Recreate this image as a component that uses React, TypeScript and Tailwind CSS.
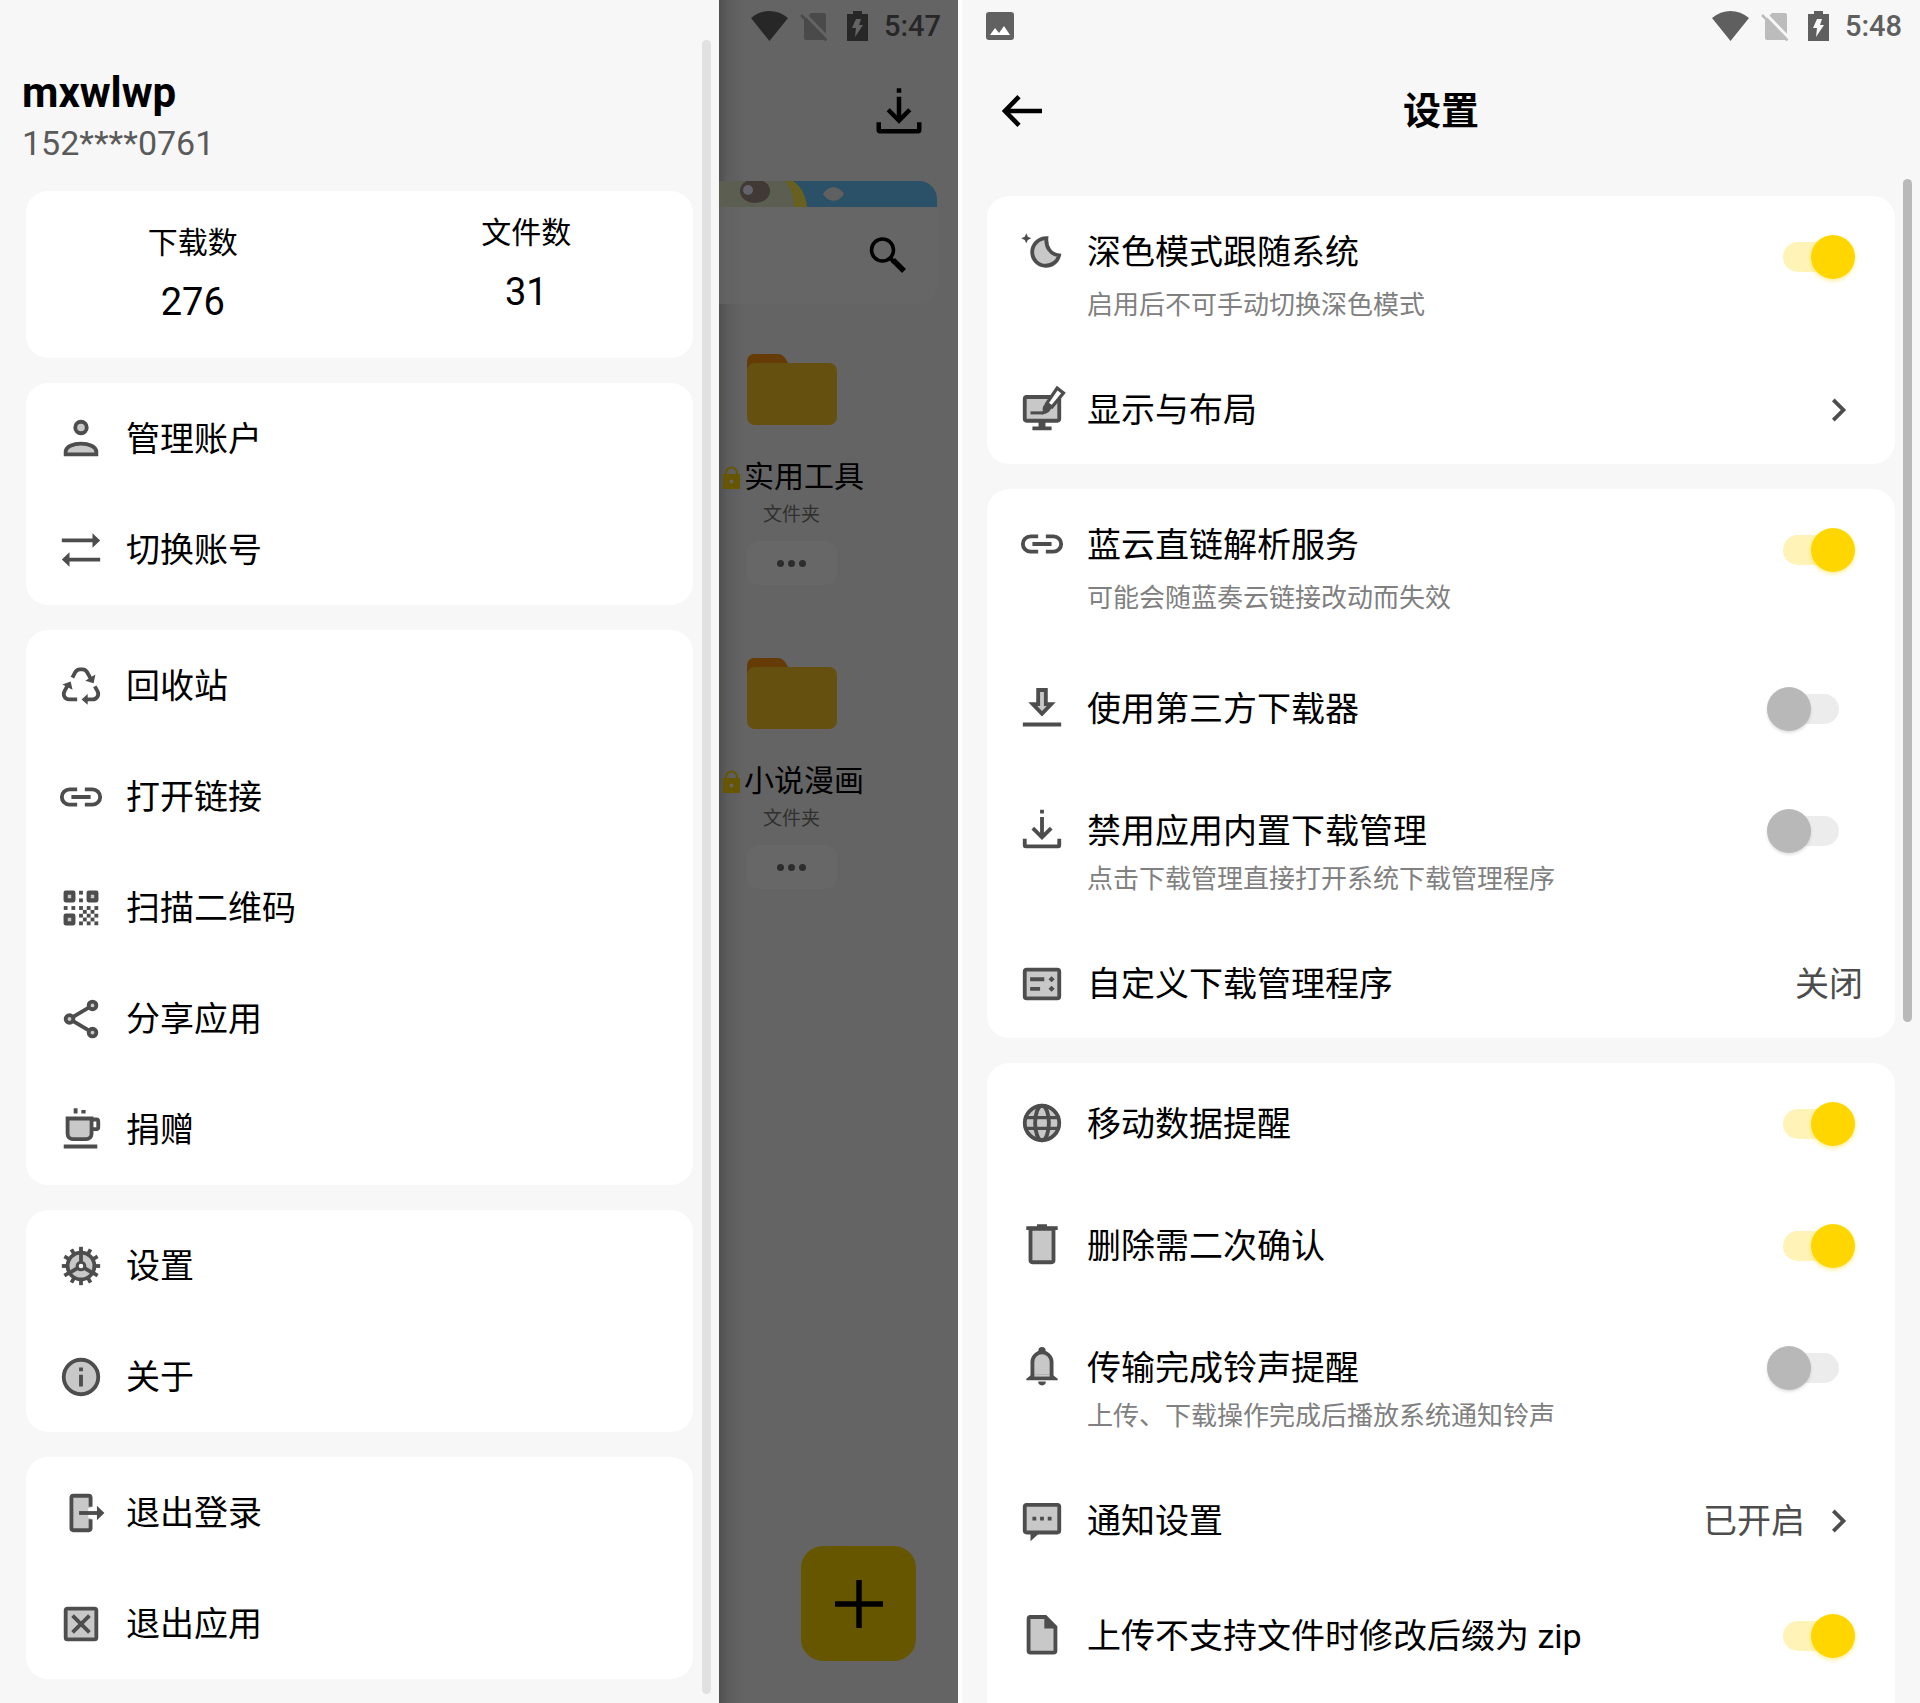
import type { ReactNode } from "react";

const DARK = "#4d4d4d";
const LIGHT = "#c8c8c8";

function Icon({ children, className = "size-[46px]", color = DARK }: { children: ReactNode; className?: string; color?: string }) {
  return (
    <svg
      viewBox="0 0 24 24"
      className={`${className} shrink-0 overflow-visible`}
      fill="none"
      stroke={color}
      strokeWidth={2}
      aria-hidden="true"
    >
      {children}
    </svg>
  );
}

const PersonIcon = () => (
  <Icon>
    <circle cx="12" cy="6" r="3" fill={LIGHT} />
    <path d="M4 20v-1.2C4 16 8 14.4 12 14.4s8 1.6 8 4.4V20z" fill={LIGHT} />
  </Icon>
);

const SwapIcon = () => (
  <Icon>
    <path d="M2 6h16V3.2L22 7l-4 3.8V8H2zM22 16H6v-2.8L2 17l4 3.8V18h16z" fill={DARK} stroke="none" />
  </Icon>
);

const RecycleIcon = () => (
  <Icon>
    <path d="M7.5 7.6 9 4.8a3 3 0 0 1 2.4-1.5h1.4a3 3 0 0 1 2.4 1.5L17 8M5.2 11.5l-1.6 2.8C2.2 16.8 3.6 19 5.8 19H10M19.2 12.2l1.4 2.5c1.1 2-.3 4.3-2.6 4.3h-3" />
    <path d="m19.5 6-.9 4.6-4.4-1.3zM2.3 11.2l4.3-1.6 1 4.3zM12.3 19l3.2-2.8v5.6z" fill={DARK} stroke="none" />
  </Icon>
);

const LinkIcon = () => (
  <Icon>
    <path d="M10 8H6a4 4 0 0 0 0 8h4M14 8h4a4 4 0 0 1 0 8h-4M7 12h10" />
  </Icon>
);

const qrCells = [
  [11, 3], [11, 7], [3, 11], [7, 11],
  [11, 11], [15, 11], [19, 11],
  [13, 13], [17, 13],
  [11, 15], [15, 15], [19, 15],
  [13, 17], [17, 17],
  [11, 19], [15, 19], [19, 19],
];

const QrIcon = () => (
  <Icon>
    <path d="M4 4h4v4H4zM16 4h4v4h-4zM4 16h4v4H4z" fill={LIGHT} strokeLinejoin="round" strokeWidth={2.2} />
    {qrCells.map(([x, y]) => (
      <rect key={`${x}-${y}`} x={x} y={y} width="2" height="2" fill={DARK} stroke="none" />
    ))}
  </Icon>
);

const ShareIcon = () => (
  <Icon>
    <path d="M18 4.9 6 12l12 7.1" />
    <circle cx="6" cy="12" r="2" fill={LIGHT} />
    <circle cx="18" cy="4.9" r="2" fill={LIGHT} />
    <circle cx="18" cy="19.1" r="2" fill={LIGHT} />
  </Icon>
);

const CupIcon = () => (
  <Icon>
    <path d="M5 6h12.5v8a2.8 2.8 0 0 1-2.8 2.8H7.8A2.8 2.8 0 0 1 5 14z" fill={LIGHT} />
    <path d="M17.5 6.5H20a1 1 0 0 1 1 1v3a1 1 0 0 1-1 1h-2.5M3 20.6h17.5" />
    <path d="M8.2.6h2v2.8h-2zM12.2 1.6h2.2v1.8h-2.2z" fill={DARK} stroke="none" />
  </Icon>
);

const gearTeeth = [0, 30, 60, 90, 120, 150, 180, 210, 240, 270, 300, 330];

const GearIcon = () => (
  <Icon>
    {gearTeeth.map((a) => (
      <path key={a} d="M12 2v3" transform={`rotate(${a} 12 12)`} />
    ))}
    <circle cx="12" cy="12" r="7" fill={LIGHT} />
    <path d="M12 12V5M12 12l6 3.6M12 12l-6 3.6" />
    <circle cx="12" cy="12" r="2" fill="#fff" strokeWidth={1.6} />
  </Icon>
);

const InfoIcon = () => (
  <Icon>
    <circle cx="12" cy="12" r="9" fill={LIGHT} />
    <path d="M12 7v2M12 10.8V17" />
  </Icon>
);

const LogoutIcon = () => (
  <Icon>
    <path d="M7 3h10v18H7z" fill={LIGHT} stroke="none" />
    <path d="M17 8.8V4a1 1 0 0 0-1-1H8a1 1 0 0 0-1 1v16a1 1 0 0 0 1 1h8a1 1 0 0 0 1-1v-4.8" />
    <path d="M17 9.5v5" stroke="#fff" strokeWidth={2.4} />
    <path d="M11 12h10" />
    <path d="m20.3 8.2 3.9 3.8-3.9 3.8z" fill={DARK} stroke="none" />
  </Icon>
);

const CloseBoxIcon = () => (
  <Icon>
    <rect x="4" y="4" width="16" height="16" rx="1" fill={LIGHT} />
    <path d="m7.6 7.6 8.8 8.8M16.4 7.6l-8.8 8.8" />
  </Icon>
);

const MoonIcon = () => (
  <Icon>
    <path d="M14.3 5.3c-4.2.1-7.4 3.3-7.4 7.2 0 4 3.1 7.2 7 7.2 3.4 0 6.3-2.2 7-5.4-4.5-.5-7-4.4-6.6-9z" fill={LIGHT} />
    <path d="m3.8 2.8.8 1.8 1.8.8-1.8.8-.8 1.8-.8-1.8-1.8-.8 1.8-.8z" fill={DARK} stroke="none" />
  </Icon>
);

const DisplayIcon = () => (
  <Icon>
    <rect x="3" y="5.2" width="18" height="12.4" rx="1" fill={LIGHT} />
    <path d="M10.2 18h3.6v2.6H17v2H7v-2h3.2z" fill={DARK} stroke="none" />
    <path d="M6 13.5h6.5" strokeWidth={1.6} />
    <path d="M12.4 12.2c-.2-2 .8-3.6 2.3-3.4l2 1.6c.4 2-2.4 4-5 3.9z" fill={DARK} stroke="none" />
    <path d="m19.9.6 3.3 2.5-6 7.4-2.7-2z" fill="#fff" strokeWidth={1.7} />
  </Icon>
);

const ArrowDownIcon = () => (
  <Icon>
    <path d="M10 2.6h4V10h2.8L12 15l-4.8-5H10z" fill={LIGHT} />
    <path d="M2 20.6h20" />
  </Icon>
);

function TrayIcon({ className, color }: { className?: string; color?: string }) {
  return (
    <Icon className={className} color={color}>
      <path d="M12 1.4v2M12 5.2V16M7.2 11l4.8 4.8 4.8-4.8M3 16.6V20a.5.5 0 0 0 .5.5h17a.5.5 0 0 0 .5-.5v-3.4" />
    </Icon>
  );
}

const PanelIcon = () => (
  <Icon>
    <rect x="3" y="4.5" width="18" height="15" rx="1" fill={LIGHT} />
    <path d="M5.8 9.5h7.4M5.8 14.5H11" />
    <path d="m17 7.9 1.6 1.6-1.6 1.6-1.6-1.6zM17 12.9l1.6 1.6-1.6 1.6-1.6-1.6z" fill={DARK} stroke="none" />
  </Icon>
);

const GlobeIcon = () => (
  <Icon>
    <circle cx="12" cy="12" r="9" fill={LIGHT} />
    <ellipse cx="12" cy="12" rx="3.6" ry="9" />
    <path d="M3.6 9.2h16.8M3.6 14.8h16.8" strokeWidth={1.8} />
  </Icon>
);

const TrashIcon = () => (
  <Icon>
    <path d="M6 3.5V20a1 1 0 0 0 1 1h10a1 1 0 0 0 1-1V3.5z" fill={LIGHT} />
    <path d="M3.8 3.2h16.4M9.4 2.2h5.2" />
  </Icon>
);

const BellIcon = () => (
  <Icon>
    <circle cx="12" cy="3.4" r="1.9" fill={DARK} stroke="none" />
    <path d="M10 19.6a2 2 0 0 0 4 0z" fill={DARK} stroke="none" />
    <path d="M7 17.6V9.4a5 5 0 0 1 10 0v8.2z" fill={LIGHT} />
    <path d="M3.8 18.9v-.8L6.5 16h11l2.7 2.1v.8z" fill={DARK} stroke="none" />
    <path d="M8 16h8v1H8z" fill={LIGHT} stroke="none" />
  </Icon>
);

const ChatIcon = () => (
  <Icon>
    <path d="M6 18h5l-5 4.6z" fill={DARK} stroke="none" />
    <rect x="3" y="3.6" width="18" height="14.4" rx="1" fill={LIGHT} />
    <path d="M7 10.8h2M11 10.8h2M15 10.8h2" />
  </Icon>
);

const FileIcon = () => (
  <Icon>
    <path d="M6 2.6h7.8L19 7.8v12.4a1 1 0 0 1-1 1H6a1 1 0 0 1-1-1V3.6a1 1 0 0 1 1-1z" fill={LIGHT} />
    <path d="M13.2 2v6.6H20z" fill={DARK} stroke="none" />
  </Icon>
);

const ChevronIcon = () => (
  <Icon>
    <path d="M7.8 16.6 12.4 12 7.8 7.4 9.2 6l6 6-6 6z" fill={DARK} stroke="none" />
  </Icon>
);

function StatusIcons({ time, tone, faint, cut }: { time: string; tone: string; faint: string; cut: string }) {
  return (
    <div className="flex items-center" style={{ color: tone }}>
      <svg viewBox="0 0 37 30" className="h-[30px] w-[37px]" aria-hidden="true">
        <path d="M0 7C11-2.3 26-2.3 37 7L18.5 30z" fill="currentColor" />
      </svg>
      <svg viewBox="0 0 28 30" className="ml-3 h-[30px] w-7" aria-hidden="true">
        <path d="M11 2h13a2 2 0 0 1 2 2v23a2 2 0 0 1-2 2H6a2 2 0 0 1-2-2V9z" fill={faint} />
        <path d="M3 1 29 28" stroke={cut} strokeWidth="3" />
        <path d="M1 4l25.5 25.5" stroke={faint} strokeWidth="2.6" />
      </svg>
      <svg viewBox="0 0 21 30" className="ml-[19px] h-[30px] w-[21px]" aria-hidden="true">
        <path d="M6 0h9v3h6v27H0V3h6z" fill="currentColor" />
        <path d="M9 8h5l-2 6h4L8 26l1-9H5z" fill={cut} />
      </svg>
      <span className="ml-4 text-[29px] leading-8 font-medium">{time}</span>
    </div>
  );
}

type MenuItem = { label: string; icon: ReactNode };

const menuGroups: MenuItem[][] = [
  [
    { label: "管理账户", icon: <PersonIcon /> },
    { label: "切换账号", icon: <SwapIcon /> },
  ],
  [
    { label: "回收站", icon: <RecycleIcon /> },
    { label: "打开链接", icon: <LinkIcon /> },
    { label: "扫描二维码", icon: <QrIcon /> },
    { label: "分享应用", icon: <ShareIcon /> },
    { label: "捐赠", icon: <CupIcon /> },
  ],
  [
    { label: "设置", icon: <GearIcon /> },
    { label: "关于", icon: <InfoIcon /> },
  ],
  [
    { label: "退出登录", icon: <LogoutIcon /> },
    { label: "退出应用", icon: <CloseBoxIcon /> },
  ],
];

function Drawer() {
  return (
    <aside className="flex bg-[#f7f7f7]">
      <div className="flex-1 pt-[69px] pb-6 pl-[22px]">
        <h1 className="text-[42px] leading-[48px] font-bold">mxwlwp</h1>
        <p className="mt-1.5 text-[34px] leading-10 text-[#5a5a5a]">152****0761</p>
        <div className="mt-7 ml-1 flex flex-col gap-[25px]">
          <dl className="grid grid-cols-2 rounded-[22px] bg-white pb-8 text-center">
            <div className="pt-8">
              <dt className="text-[30px] leading-10">下载数</dt>
              <dd className="mt-[15px] text-[38px] leading-[48px]">276</dd>
            </div>
            <div className="pt-[22px]">
              <dt className="text-[30px] leading-10">文件数</dt>
              <dd className="mt-[15px] text-[38px] leading-[48px]">31</dd>
            </div>
          </dl>
          {menuGroups.map((group, i) => (
            <nav key={i} className="rounded-[22px] bg-white">
              {group.map((item) => (
                <button key={item.label} type="button" className="flex h-[111px] w-full items-center gap-[22px] pl-8 text-left text-[34px] leading-[48px]">
                  {item.icon}
                  {item.label}
                </button>
              ))}
            </nav>
          ))}
        </div>
      </div>
      <div className="mt-10 mr-2 mb-[9px] ml-[9px] w-[9px] rounded-full bg-[#e1e1e1]" />
    </aside>
  );
}

function Folder({ name }: { name: string }) {
  return (
    <li className="flex w-[145px] flex-col items-center">
      <svg viewBox="0 0 90 71" className="h-[71px] w-[90px]" aria-hidden="true">
        <path d="M0 20V7a7 7 0 0 1 7-7h24c4 0 7 3 10 9v11z" fill="#663b05" />
        <path d="M0 17a8 8 0 0 1 8-8h74a8 8 0 0 1 8 8v46a8 8 0 0 1-8 8H8a8 8 0 0 1-8-8z" fill="#66500f" />
      </svg>
      <div className="mt-8 flex w-full items-center justify-end gap-1">
        <svg viewBox="0 0 17 23" className="h-[23px] w-[17px]" aria-hidden="true">
          <path d="M3 9V7a5.5 5.5 0 0 1 11 0v2" fill="none" stroke="#665600" strokeWidth="2" />
          <path d="M0 8h17v15H0z" fill="#665600" />
          <circle cx="8.5" cy="15.5" r="2" fill="#656565" />
        </svg>
        <span className="text-[30px] leading-10">{name}</span>
      </div>
      <span className="mt-1 text-[19px] leading-7 text-[#303030]">文件夹</span>
      <button type="button" aria-label={`${name} 更多`} className="mt-3 flex h-11 w-[90px] items-center justify-center gap-1 rounded-xl bg-[#676767]">
        <span className="size-[7px] rounded-full bg-[#2d2d2d]" />
        <span className="size-[7px] rounded-full bg-[#2d2d2d]" />
        <span className="size-[7px] rounded-full bg-[#2d2d2d]" />
      </button>
    </li>
  );
}

function DimmedFiles() {
  return (
    <section className="flex flex-col bg-[linear-gradient(to_right,#4f4f4f,#5c5c5c_8px,#646464_26px)]">
      <div className="flex h-[54px] items-center justify-end pr-[17px] pb-0.5">
        <StatusIcons time="5:47" tone="#272727" faint="#4a4a4a" cut="#646464" />
      </div>
      <button type="button" aria-label="下载" className="mt-[31px] mr-8 self-end">
        <TrayIcon className="size-[54px]" color="#000" />
      </button>
      <div className="mt-[42px] mr-[21px] overflow-hidden rounded-r-[18px] bg-[#676767]/60">
        <svg viewBox="0 0 218 26" className="block h-[26px] w-full" preserveAspectRatio="xMaxYMid slice" aria-hidden="true">
          <path d="M0 0h218v26H0z" fill="#2a5168" />
          <path d="M0 0h74c8 5 13 15 14 26H0z" fill="#67601f" />
          <path d="M0 0h66c6 6 9 16 9 26H0z" fill="#5b5e50" />
          <ellipse cx="36" cy="10" rx="15" ry="12" fill="#403935" />
          <circle cx="29" cy="9" r="5" fill="#62636b" />
          <path d="M104 13c5-9 16-9 21 0-5 9-16 9-21 0z" fill="#5f605f" />
        </svg>
        <div className="flex h-[97px] items-start justify-end pt-[30px] pr-[31px]">
          <button type="button" aria-label="搜索">
            <svg viewBox="0 0 37 37" className="size-[37px]" fill="none" stroke="#000" aria-hidden="true">
              <circle cx="13.5" cy="13" r="11" strokeWidth="3.6" />
              <path d="m22 22 3 3" strokeWidth="4" />
              <path d="m24 23 11 11" strokeWidth="5.5" />
            </svg>
          </button>
        </div>
      </div>
      <ul className="mt-[50px] flex flex-col gap-[73px]">
        <Folder name="实用工具" />
        <Folder name="小说漫画" />
      </ul>
      <button type="button" aria-label="添加" className="mt-auto mr-[42px] mb-[42px] flex size-[115px] items-center justify-center self-end rounded-[22px] bg-[#665600]">
        <svg viewBox="0 0 48 48" className="size-12" stroke="#000" strokeWidth="5.5" aria-hidden="true">
          <path d="M24 0v48M0 24h48" />
        </svg>
      </button>
    </section>
  );
}

type Setting = {
  id: string;
  title: string;
  icon: ReactNode;
  sub?: string;
  loose?: boolean;
  toggle?: boolean;
  value?: string;
  chevron?: boolean;
};

const settingGroups: Setting[][] = [
  [
    { id: "dark", title: "深色模式跟随系统", sub: "启用后不可手动切换深色模式", loose: true, toggle: true, icon: <MoonIcon /> },
    { id: "layout", title: "显示与布局", chevron: true, icon: <DisplayIcon /> },
  ],
  [
    { id: "resolve", title: "蓝云直链解析服务", sub: "可能会随蓝奏云链接改动而失效", loose: true, toggle: true, icon: <LinkIcon /> },
    { id: "third", title: "使用第三方下载器", toggle: false, icon: <ArrowDownIcon /> },
    { id: "builtin", title: "禁用应用内置下载管理", sub: "点击下载管理直接打开系统下载管理程序", toggle: false, icon: <TrayIcon /> },
    { id: "custom", title: "自定义下载管理程序", value: "关闭", icon: <PanelIcon /> },
  ],
  [
    { id: "mobile", title: "移动数据提醒", toggle: true, icon: <GlobeIcon /> },
    { id: "delete", title: "删除需二次确认", toggle: true, icon: <TrashIcon /> },
    { id: "ring", title: "传输完成铃声提醒", sub: "上传、下载操作完成后播放系统通知铃声", toggle: false, icon: <BellIcon /> },
    { id: "notify", title: "通知设置", value: "已开启", chevron: true, icon: <ChatIcon /> },
    { id: "zip", title: "上传不支持文件时修改后缀为 zip", toggle: true, icon: <FileIcon /> },
  ],
];

function Switch({ id, on }: { id: string; on: boolean }) {
  return (
    <span className="mr-2 flex h-[122px] items-center">
      <input
        id={id}
        type="checkbox"
        role="switch"
        defaultChecked={on}
        className="relative h-11 w-[88px] appearance-none before:absolute before:top-[7px] before:left-4 before:h-[30px] before:w-[56px] before:rounded-full before:bg-[#ececec] after:absolute after:top-0 after:left-0 after:size-11 after:rounded-full after:bg-[#b8b8b8] after:shadow-[0_2px_3px_rgba(0,0,0,0.12)] checked:before:bg-[#fff3b8] checked:after:left-11 checked:after:bg-[#ffd600] checked:after:shadow-[0_2px_4px_rgba(255,214,0,0.4)]"
      />
    </span>
  );
}

function SettingRow({ item }: { item: Setting }) {
  if (item.toggle === undefined) {
    return (
      <button type="button" className="flex h-[109px] w-full items-center gap-[22px] px-8 text-left text-[34px] leading-[48px]">
        {item.icon}
        <span className="flex-1">{item.title}</span>
        <span className="flex items-center gap-3 text-[#4d4d4d]">
          {item.value}
          {item.chevron && <ChevronIcon />}
        </span>
      </button>
    );
  }
  const top = item.loose ? "pt-8" : "pt-[37px]";
  return (
    <div className={`flex items-start gap-[22px] px-8 ${item.sub ? "h-[159px]" : "h-[122px]"}`}>
      <span className={`flex ${top}`}>{item.icon}</span>
      <label htmlFor={item.id} className={`flex flex-1 flex-col ${top}`}>
        <span className="text-[34px] leading-[48px]">{item.title}</span>
        {item.sub && <span className={`text-[26px] leading-8 text-[#808080] ${item.loose ? "mt-[13px]" : "mt-2"}`}>{item.sub}</span>}
      </label>
      <Switch id={item.id} on={item.toggle} />
    </div>
  );
}

function Settings() {
  return (
    <main className="flex flex-col bg-[#f7f7f7]">
      <div className="flex h-[54px] items-center justify-between pr-[18px] pb-0.5 pl-6">
        <svg viewBox="0 0 28 28" className="size-7" aria-hidden="true">
          <rect width="28" height="28" rx="3" fill="#616161" />
          <path d="m4 23 5-7 4 5 5-7 6 9z" fill="#fff" />
        </svg>
        <StatusIcons time="5:48" tone="#5f5f5f" faint="#bcbcbc" cut="#f7f7f7" />
      </div>
      <header className="grid h-[114px] grid-cols-[1fr_auto_1fr] items-center px-10">
        <button type="button" aria-label="返回" className="justify-self-start">
          <svg viewBox="0 0 40 32" className="h-8 w-10" fill="none" stroke="#000" strokeWidth="4.6" aria-hidden="true">
            <path d="M40 16H4M17 1.7 3 16l14 14.3" />
          </svg>
        </button>
        <h2 className="text-[38px] leading-[48px] font-bold">设置</h2>
      </header>
      <div className="flex flex-1">
        <div className="flex flex-1 flex-col gap-[25px] pt-7 pl-[25px]">
          {settingGroups.map((group, i) => (
            <section key={i} className="rounded-[22px] bg-white last:flex-1 last:rounded-b-none">
              {group.map((item) => (
                <SettingRow key={item.id} item={item} />
              ))}
            </section>
          ))}
        </div>
        <div className="mt-[11px] mr-2 ml-2 h-[843px] w-[9px] rounded-full bg-[#b9b9b9]" />
      </div>
    </main>
  );
}

export default function App() {
  return (
    <div
      lang="zh-CN"
      className="grid min-h-screen grid-cols-[719fr_239fr_4px_958fr] bg-white font-['Roboto','Noto_Sans_CJK_SC',sans-serif] text-black"
    >
      <Drawer />
      <DimmedFiles />
      <div />
      <Settings />
    </div>
  );
}
